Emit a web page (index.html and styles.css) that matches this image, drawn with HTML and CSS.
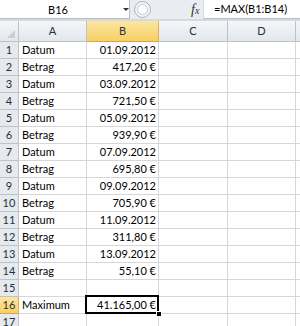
FILE: index.html
```html
<!DOCTYPE html>
<html>
<head>
  <meta charset="utf-8">
  <title>Maximum</title>
  <link rel="stylesheet" href="styles.css">
</head>
<body>
  <div class="bar">
    <div class="namebox"><span class="name">B16</span><span class="drop"></span></div>
    <div class="knob"><span class="knob-in"></span></div>
    <div class="fx">f<span class="fx-x">x</span></div>
    <div class="formula">=MAX(B1:B14)</div>
  </div>
  <div class="sep"></div>
  <div class="sheet">
    <div class="hd corner"><span class="tri"></span></div>
    <div class="hd col">A</div>
    <div class="hd col sel">B</div>
    <div class="hd col">C</div>
    <div class="hd col">D</div>
    <div class="hd col"></div>

    <div class="hd row">1</div><div class="c">Datum</div><div class="c r">01.09.2012</div><div class="c"></div><div class="c"></div><div class="c"></div>
    <div class="hd row">2</div><div class="c">Betrag</div><div class="c r">417,20 €</div><div class="c"></div><div class="c"></div><div class="c"></div>
    <div class="hd row">3</div><div class="c">Datum</div><div class="c r">03.09.2012</div><div class="c"></div><div class="c"></div><div class="c"></div>
    <div class="hd row">4</div><div class="c">Betrag</div><div class="c r">721,50 €</div><div class="c"></div><div class="c"></div><div class="c"></div>
    <div class="hd row">5</div><div class="c">Datum</div><div class="c r">05.09.2012</div><div class="c"></div><div class="c"></div><div class="c"></div>
    <div class="hd row">6</div><div class="c">Betrag</div><div class="c r">939,90 €</div><div class="c"></div><div class="c"></div><div class="c"></div>
    <div class="hd row">7</div><div class="c">Datum</div><div class="c r">07.09.2012</div><div class="c"></div><div class="c"></div><div class="c"></div>
    <div class="hd row">8</div><div class="c">Betrag</div><div class="c r">695,80 €</div><div class="c"></div><div class="c"></div><div class="c"></div>
    <div class="hd row">9</div><div class="c">Datum</div><div class="c r">09.09.2012</div><div class="c"></div><div class="c"></div><div class="c"></div>
    <div class="hd row">10</div><div class="c">Betrag</div><div class="c r">705,90 €</div><div class="c"></div><div class="c"></div><div class="c"></div>
    <div class="hd row">11</div><div class="c">Datum</div><div class="c r">11.09.2012</div><div class="c"></div><div class="c"></div><div class="c"></div>
    <div class="hd row">12</div><div class="c">Betrag</div><div class="c r">311,80 €</div><div class="c"></div><div class="c"></div><div class="c"></div>
    <div class="hd row">13</div><div class="c">Datum</div><div class="c r">13.09.2012</div><div class="c"></div><div class="c"></div><div class="c"></div>
    <div class="hd row">14</div><div class="c">Betrag</div><div class="c r">55,10 €</div><div class="c"></div><div class="c"></div><div class="c"></div>
    <div class="hd row">15</div><div class="c"></div><div class="c"></div><div class="c"></div><div class="c"></div><div class="c"></div>
    <div class="hd row sel">16</div><div class="c">Maximum</div><div class="c r active">41.165,00 €<span class="frame"><span class="handle"></span></span></div><div class="c"></div><div class="c"></div><div class="c"></div>
    <div class="hd row">17</div><div class="c"></div><div class="c"></div><div class="c"></div><div class="c"></div><div class="c"></div>
  </div>
</body>
</html>
```

FILE: styles.css
```css
body {margin: 0;
      width: 300px;
      height: 326px;
      overflow: hidden;
      background-color: #ffffff;
      font-family: Lato, "Liberation Sans", sans-serif;
      font-size: 11px;
      color: #000000;}

.bar {display: flex;
      height: 19px;
      background-color: #e9edf1;}

.namebox {display: flex;
          align-items: center;
          width: 130px;
          background-color: #ffffff;
          border-right: 1px solid #b7bec7;
          border-bottom: 1px solid #b7bec7;
          box-sizing: border-box;}

.name {width: 116px;
       text-align: center;}

.drop {width: 0;
       height: 0;
       margin-left: 7px;
       border-left: 3px solid transparent;
       border-right: 3px solid transparent;
       border-top: 3px solid #333333;}

.knob {display: flex;
       align-items: center;
       justify-content: center;
       width: 17px;
       height: 17px;
       margin: 1px 0 0 4px;
       border: 1px solid #a9b1bb;
       border-radius: 50%;
       background-color: #f3f5f7;
       box-sizing: border-box;}

.knob-in {width: 9px;
          height: 9px;
          border: 1px solid #c3c9d0;
          border-radius: 50%;
          background-color: #fbfcfd;}

.fx {margin-left: auto;
     width: 11px;
     padding-right: 1px;
     font-family: "Liberation Serif", serif;
     font-style: italic;
     font-size: 14px;
     line-height: 19px;
     color: #333333;}

.fx-x {font-size: 10px;}

.formula {width: 97px;
          padding-left: 10px;
          line-height: 18px;
          background-color: #ffffff;
          border-left: 1px solid #d3d8de;
          border-bottom: 1px solid #b7bec7;
          box-sizing: border-box;}

.sep {height: 2px;
      background-color: #d5dae0;}

.sheet {display: grid;
        grid-template-columns: 19px 68px 72px 69px 68px 30px;
        grid-template-rows: 21px;
        grid-auto-rows: 17px;}

.sheet > div {box-sizing: border-box;
              border-right: 1px solid #d4d7db;
              border-bottom: 1px solid #d4d7db;
              white-space: nowrap;
              overflow: hidden;}

.c {padding-left: 3px;
    line-height: 16px;}

.c.r {text-align: right;
      padding-right: 2px;}

.hd {background: linear-gradient(#f4f6f8, #e3e7ec);
     color: #27313c;
     text-align: center;}

.sheet > .hd {border-right: 1px solid #bcc3cb;
              border-bottom: 1px solid #bcc3cb;}

.col {line-height: 20px;}

.row {line-height: 16px;
      background: #e6e9ed;}

.sheet > .hd.sel {background: linear-gradient(#fbe6a2, #f7cf64);
                  border-right-color: #d9b25b;
                  border-bottom-color: #d9a641;}

.corner {position: relative;}

.tri {position: absolute;
      right: 3px;
      bottom: 3px;
      width: 0;
      height: 0;
      border-left: 8px solid transparent;
      border-bottom: 8px solid #c9ced4;}

.sheet > .active {overflow: visible;
                  position: relative;}

.frame {position: absolute;
        top: -2px;
        left: -2px;
        right: -1px;
        bottom: -1px;
        border: 2px solid #000000;}

.handle {position: absolute;
         right: -5px;
         bottom: -5px;
         width: 4px;
         height: 4px;
         background-color: #000000;
         border: 1px solid #ffffff;}
```
